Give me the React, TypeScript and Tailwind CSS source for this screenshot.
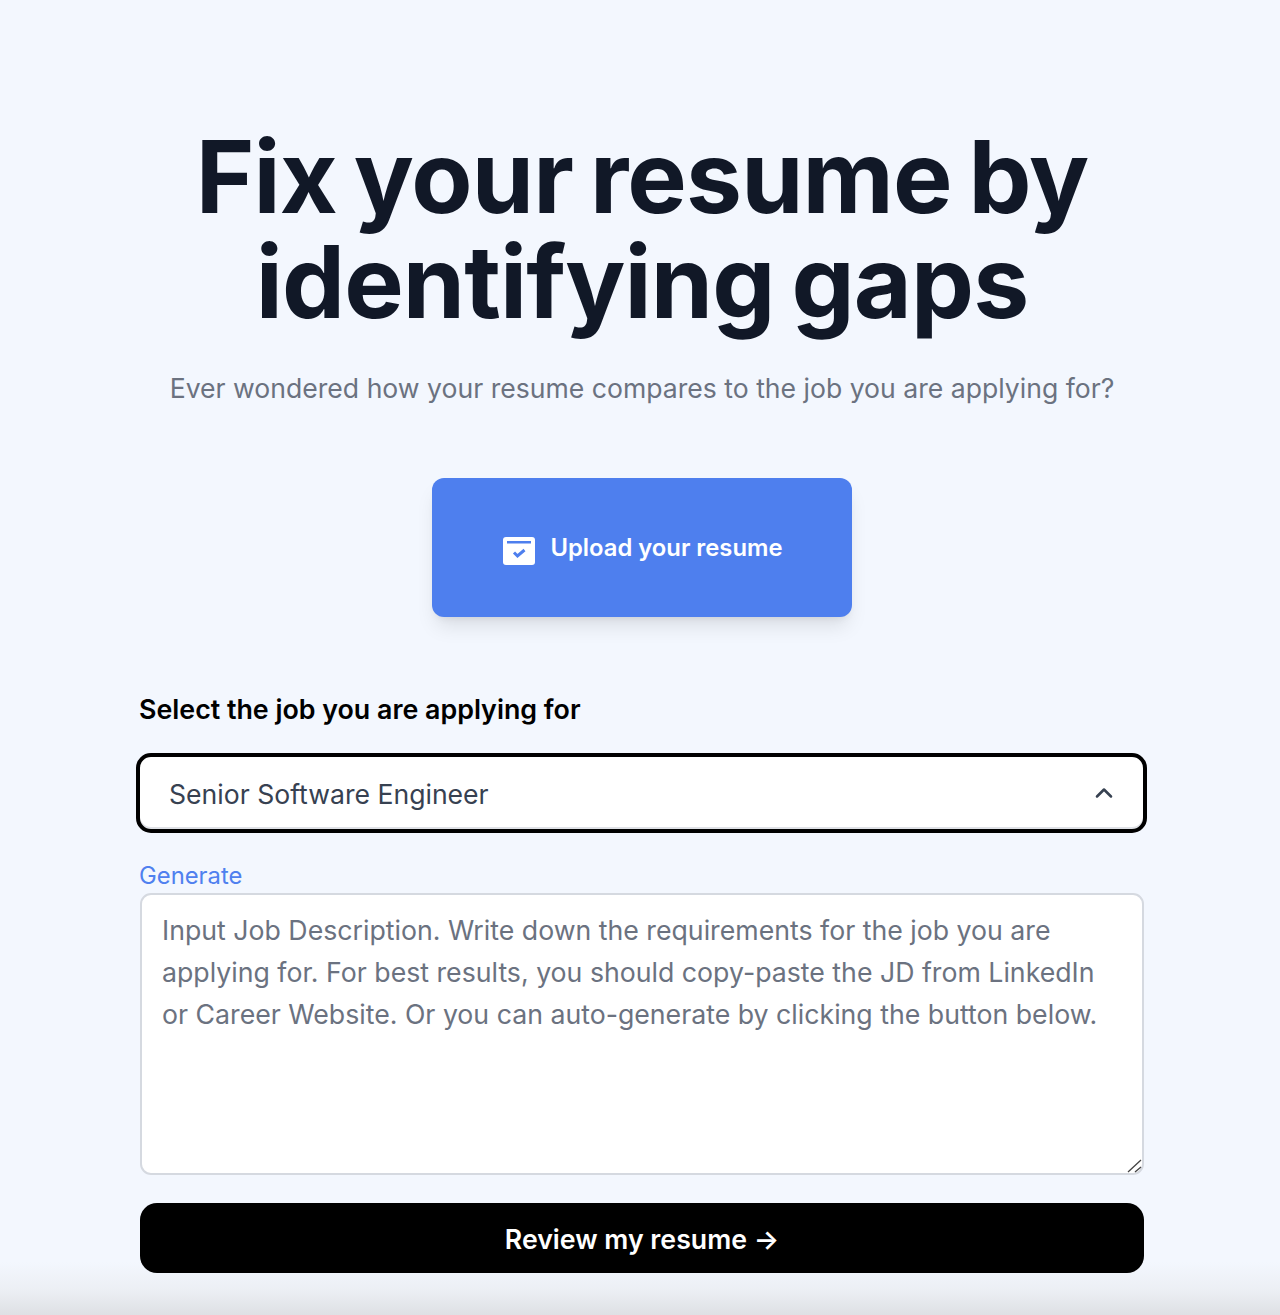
import React from 'react';
import { ChevronUp } from 'lucide-react';

const App: React.FC = () => {
  return (
    <div className="h-[1315px] overflow-hidden bg-[linear-gradient(to_bottom,#f3f7fe_1262px,#eceff4_1290px,#dee0e4_1315px)] font-['Inter',sans-serif]">
      <main className="ml-[140px] flex w-[1004px] flex-col items-center pt-[124px]">
        <h1 className="w-[1004px] text-center text-[100px] leading-[105px] font-bold tracking-[-0.85px] text-[#111827] [word-spacing:-6px]">
          Fix your resume by identifying gaps
        </h1>
        <p className="mt-[33px] text-center text-[26.6px] leading-[42px] whitespace-nowrap text-[#6b7280]">
          Ever wondered how your resume compares to the job you are applying for?
        </p>

        <button className="mt-[69px] flex h-[139px] w-[420px] items-center justify-center gap-[15px] rounded-[12px] bg-[#4e7fee] pl-[2px] text-[23.8px] font-semibold text-white shadow-[0_13px_20px_-4px_rgba(0,0,0,0.1),0_5px_8px_-5px_rgba(0,0,0,0.1)]">
          <svg width="32" height="28" viewBox="0 0 32 28" className="mt-[6px]">
            <rect width="32" height="28" rx="3" fill="#fff" />
            <rect x="4" y="4" width="24" height="2.5" fill="#4e7fee" />
            <path d="M11 15.5l3.5 3.5 7-6" fill="none" stroke="#4e7fee" strokeWidth="3" />
          </svg>
          Upload your resume
        </button>

        <div className="mt-[72px] w-full">
          <label className="-ml-px block text-[26.8px] leading-[40px] font-semibold text-black">
            Select the job you are applying for
          </label>
          <div className="mt-[24px] flex h-[80px] w-[1011px] -translate-x-[4px] items-center justify-between rounded-[15px] border-[4px] border-black bg-white pr-[25px] pl-[29px] text-[26.6px] text-[#374151] shadow-[inset_0_-2px_0_#dfe1e6]">
            <span className="pt-[3px]">Senior Software Engineer</span>
            <ChevronUp size={28} strokeWidth={2.2} className="text-[#374151]" />
          </div>
          <div className="mt-[26px] -ml-px text-[23.8px] leading-[34px] text-[#4f80ef]">Generate</div>
          <div className="relative h-[282px] rounded-[11px] border-2 border-[#d5d9e0] bg-white px-[20px] py-[14px] text-[26.7px] leading-[42px] text-[#6b7280]">
            Input Job Description. Write down the requirements for the job you are applying for. For best results, you should copy-paste the JD from LinkedIn or Career Website. Or you can auto-generate by clicking the button below.
            <svg width="16" height="14" viewBox="0 0 16 14" className="absolute right-0 bottom-0">
              <path d="M2 13L15 1M9 13l6-5" stroke="#444" strokeWidth="1.3" />
            </svg>
          </div>
          <button className="mt-[28px] flex h-[70px] w-full items-center justify-center rounded-[17px] bg-black pt-[3px] text-[26.7px] font-semibold text-white">
            Review my resume →
          </button>
        </div>
      </main>
    </div>
  );
};

export default App;
